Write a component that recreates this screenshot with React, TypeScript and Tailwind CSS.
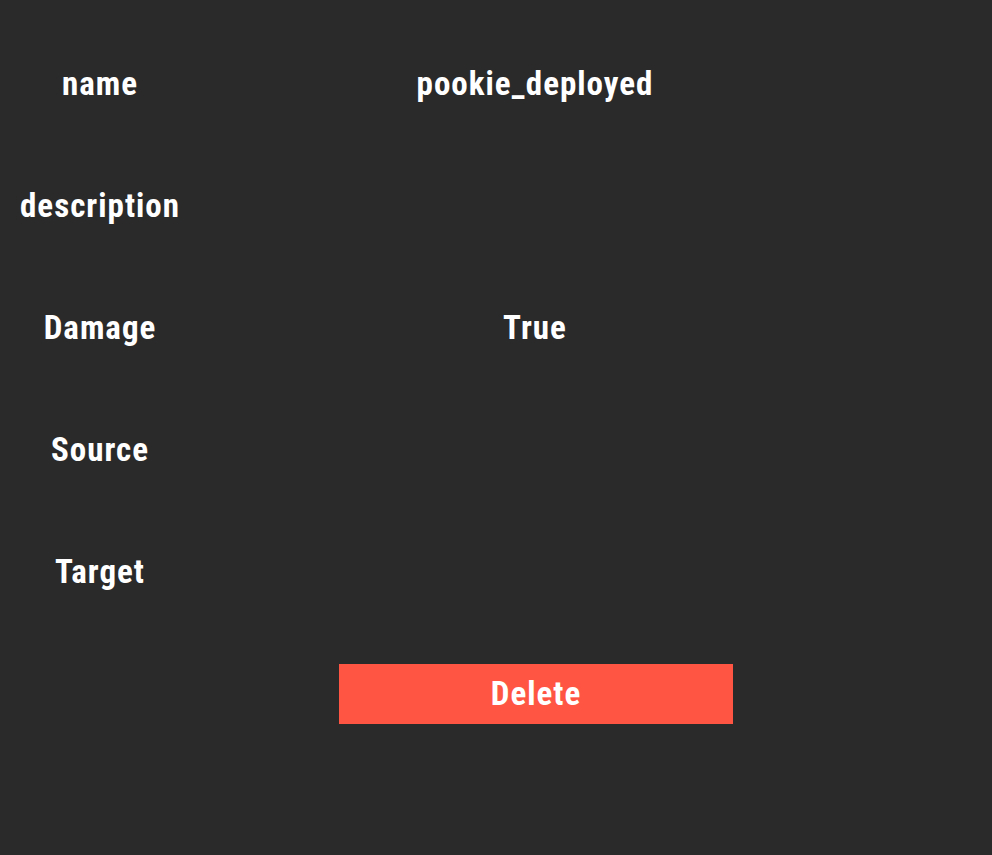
export default function App() {
  const rows = [
    { label: 'name', value: 'pookie_deployed' },
    { label: 'description', value: '' },
    { label: 'Damage', value: 'True' },
    { label: 'Source', value: '' },
    { label: 'Target', value: '' },
  ];

  return (
    <div
      className="min-h-screen w-full bg-[#2a2a2a] pt-[23px] text-white font-bold tracking-[1px]"
      style={{ fontFamily: '"Roboto Condensed", Roboto, sans-serif', fontStretch: 'condensed' }}
    >
      {rows.map((row) => (
        <div key={row.label} className="flex h-[122px] items-center">
          <div className="w-[200px] text-center text-[33px]">{row.label}</div>
          <div className="w-[670px] text-center text-[33px]">{row.value}</div>
        </div>
      ))}
      <div className="mt-[31px] pl-[339px]">
        <button className="h-[60px] w-[394px] bg-[#ff5542] text-[33px] text-white">Delete</button>
      </div>
    </div>
  );
}
